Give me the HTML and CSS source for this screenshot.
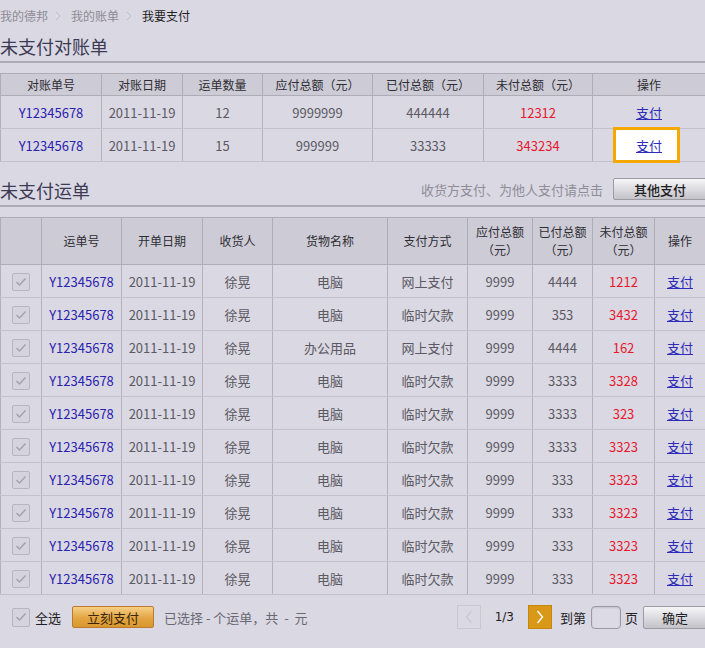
FILE: index.html
```html
<!DOCTYPE html>
<html lang="zh-CN">
<head>
<meta charset="utf-8">
<title>我要支付</title>
<link rel="stylesheet" href="styles.css">
</head>
<body>
<div class="page">
  <nav class="crumbs">
    <span class="crumb">我的德邦</span>
    <svg class="sep" width="6" height="10" viewBox="0 0 6 10"><path d="M1 1 L5 5 L1 9" fill="none" stroke="#bdbbc5" stroke-width="1"/></svg>
    <span class="crumb">我的账单</span>
    <svg class="sep" width="6" height="10" viewBox="0 0 6 10"><path d="M1 1 L5 5 L1 9" fill="none" stroke="#bdbbc5" stroke-width="1"/></svg>
    <span class="crumb current">我要支付</span>
  </nav>

  <div class="section-head first">
    <h2 class="section-title">未支付对账单</h2>
  </div>

  <table class="grid bills">
    <colgroup>
      <col style="width:101px"><col style="width:81px"><col style="width:80px"><col style="width:110px"><col style="width:111px"><col style="width:109px"><col style="width:113px">
    </colgroup>
    <thead>
      <tr><th>对账单号</th><th>对账日期</th><th>运单数量</th><th>应付总额（元）</th><th>已付总额（元）</th><th>未付总额（元）</th><th>操作</th></tr>
    </thead>
    <tbody>
      <tr><td class="no">Y12345678</td><td>2011-11-19</td><td>12</td><td>9999999</td><td>444444</td><td class="due">12312</td><td><a class="pay" href="#">支付</a></td></tr>
      <tr><td class="no">Y12345678</td><td>2011-11-19</td><td>15</td><td>999999</td><td>33333</td><td class="due">343234</td><td class="focus-cell"><span class="focus-box"></span><a class="pay" href="#">支付</a></td></tr>
    </tbody>
  </table>

  <div class="section-head second">
    <h2 class="section-title">未支付运单</h2>
    <div class="head-right">
      <span class="hint">收货方支付、为他人支付请点击</span>
      <button class="btn-grey other">其他支付</button>
    </div>
  </div>

  <table class="grid waybills">
    <colgroup>
      <col style="width:41px"><col style="width:80px"><col style="width:81px"><col style="width:70px"><col style="width:115px"><col style="width:80px"><col style="width:65px"><col style="width:60px"><col style="width:62px"><col style="width:51px">
    </colgroup>
    <thead>
      <tr><th></th><th>运单号</th><th>开单日期</th><th>收货人</th><th>货物名称</th><th>支付方式</th><th>应付总额<br>（元）</th><th>已付总额<br>（元）</th><th>未付总额<br>（元）</th><th>操作</th></tr>
    </thead>
    <tbody>
      <tr><td><span class="check"><svg width="16" height="16" viewBox="0 0 16 16"><path d="M3.5 8 L6.5 11 L12.5 4.5" fill="none" stroke="#a3a1ab" stroke-width="1.4"/></svg></span></td><td class="no">Y12345678</td><td>2011-11-19</td><td>徐晃</td><td>电脑</td><td>网上支付</td><td>9999</td><td>4444</td><td class="due">1212</td><td><a class="pay" href="#">支付</a></td></tr>
      <tr><td><span class="check"><svg width="16" height="16" viewBox="0 0 16 16"><path d="M3.5 8 L6.5 11 L12.5 4.5" fill="none" stroke="#a3a1ab" stroke-width="1.4"/></svg></span></td><td class="no">Y12345678</td><td>2011-11-19</td><td>徐晃</td><td>电脑</td><td>临时欠款</td><td>9999</td><td>353</td><td class="due">3432</td><td><a class="pay" href="#">支付</a></td></tr>
      <tr><td><span class="check"><svg width="16" height="16" viewBox="0 0 16 16"><path d="M3.5 8 L6.5 11 L12.5 4.5" fill="none" stroke="#a3a1ab" stroke-width="1.4"/></svg></span></td><td class="no">Y12345678</td><td>2011-11-19</td><td>徐晃</td><td>办公用品</td><td>网上支付</td><td>9999</td><td>4444</td><td class="due">162</td><td><a class="pay" href="#">支付</a></td></tr>
      <tr><td><span class="check"><svg width="16" height="16" viewBox="0 0 16 16"><path d="M3.5 8 L6.5 11 L12.5 4.5" fill="none" stroke="#a3a1ab" stroke-width="1.4"/></svg></span></td><td class="no">Y12345678</td><td>2011-11-19</td><td>徐晃</td><td>电脑</td><td>临时欠款</td><td>9999</td><td>3333</td><td class="due">3328</td><td><a class="pay" href="#">支付</a></td></tr>
      <tr><td><span class="check"><svg width="16" height="16" viewBox="0 0 16 16"><path d="M3.5 8 L6.5 11 L12.5 4.5" fill="none" stroke="#a3a1ab" stroke-width="1.4"/></svg></span></td><td class="no">Y12345678</td><td>2011-11-19</td><td>徐晃</td><td>电脑</td><td>临时欠款</td><td>9999</td><td>3333</td><td class="due">323</td><td><a class="pay" href="#">支付</a></td></tr>
      <tr><td><span class="check"><svg width="16" height="16" viewBox="0 0 16 16"><path d="M3.5 8 L6.5 11 L12.5 4.5" fill="none" stroke="#a3a1ab" stroke-width="1.4"/></svg></span></td><td class="no">Y12345678</td><td>2011-11-19</td><td>徐晃</td><td>电脑</td><td>临时欠款</td><td>9999</td><td>3333</td><td class="due">3323</td><td><a class="pay" href="#">支付</a></td></tr>
      <tr><td><span class="check"><svg width="16" height="16" viewBox="0 0 16 16"><path d="M3.5 8 L6.5 11 L12.5 4.5" fill="none" stroke="#a3a1ab" stroke-width="1.4"/></svg></span></td><td class="no">Y12345678</td><td>2011-11-19</td><td>徐晃</td><td>电脑</td><td>临时欠款</td><td>9999</td><td>333</td><td class="due">3323</td><td><a class="pay" href="#">支付</a></td></tr>
      <tr><td><span class="check"><svg width="16" height="16" viewBox="0 0 16 16"><path d="M3.5 8 L6.5 11 L12.5 4.5" fill="none" stroke="#a3a1ab" stroke-width="1.4"/></svg></span></td><td class="no">Y12345678</td><td>2011-11-19</td><td>徐晃</td><td>电脑</td><td>临时欠款</td><td>9999</td><td>333</td><td class="due">3323</td><td><a class="pay" href="#">支付</a></td></tr>
      <tr><td><span class="check"><svg width="16" height="16" viewBox="0 0 16 16"><path d="M3.5 8 L6.5 11 L12.5 4.5" fill="none" stroke="#a3a1ab" stroke-width="1.4"/></svg></span></td><td class="no">Y12345678</td><td>2011-11-19</td><td>徐晃</td><td>电脑</td><td>临时欠款</td><td>9999</td><td>333</td><td class="due">3323</td><td><a class="pay" href="#">支付</a></td></tr>
      <tr><td><span class="check"><svg width="16" height="16" viewBox="0 0 16 16"><path d="M3.5 8 L6.5 11 L12.5 4.5" fill="none" stroke="#a3a1ab" stroke-width="1.4"/></svg></span></td><td class="no">Y12345678</td><td>2011-11-19</td><td>徐晃</td><td>电脑</td><td>临时欠款</td><td>9999</td><td>333</td><td class="due">3323</td><td><a class="pay" href="#">支付</a></td></tr>
    </tbody>
  </table>

  <div class="footer-bar">
    <div class="footer-left">
      <span class="check big"><svg width="16" height="16" viewBox="0 0 16 16"><path d="M3.5 8 L6.5 11 L12.5 4.5" fill="none" stroke="#a3a1ab" stroke-width="1.4"/></svg></span>
      <span class="all">全选</span>
      <button class="btn-orange">立刻支付</button>
      <span class="summary">已选择 - 个运单，共&nbsp; - &nbsp;元</span>
    </div>
    <div class="pager">
      <span class="pg prev"><svg width="22" height="22" viewBox="0 0 22 22"><path d="M13.5 5 L8.5 11 L13.5 17" fill="none" stroke="#cbc9d1" stroke-width="1.3"/></svg></span>
      <span class="pg-num">1/3</span>
      <span class="pg next"><svg width="22" height="22" viewBox="0 0 22 22"><path d="M8.5 5 L13.5 11 L8.5 17" fill="none" stroke="#ffffff" stroke-width="1.4"/></svg></span>
      <span class="goto">到第</span>
      <input class="pg-input" type="text" value="">
      <span class="goto">页</span>
      <button class="btn-grey ok">确定</button>
    </div>
  </div>
</div>
</body>
</html>
```

FILE: styles.css
```css
* { box-sizing: border-box; }

html, body {
  margin: 0;
  padding: 0;
  background: #dad8e2;
}

body {
  font-family: "Noto Sans CJK SC", "Noto Sans", sans-serif;
  color: #5b5963;
  width: 705px;
  height: 648px;
  overflow: hidden;
}

.page {
  width: 705px;
}

/* breadcrumb */
.crumbs {
  height: 32px;
  display: flex;
  align-items: center;
  font-size: 12px;
  color: #8d8b96;
}
.crumb { line-height: 16px; }
.crumb.current { color: #222; }
.sep { margin: 0 10px 0 7px; }

/* section heads */
.section-head {
  display: flex;
  justify-content: space-between;
  align-items: flex-start;
  border-bottom: 2px solid #aeacb9;
}
.section-head.first { height: 31px; }
.section-head.second { height: 29px; margin-top: 16px; }

.section-title {
  margin: 0;
  font-size: 18px;
  font-weight: normal;
  color: #3c3a55;
  line-height: 29px;
}
.section-head.second .section-title { line-height: 24px; }

.head-right {
  display: flex;
  align-items: center;
  height: 22px;
}
.hint {
  font-size: 13px;
  color: #8f8d98;
  margin-right: 10px;
}

/* buttons */
.btn-grey {
  font-family: inherit;
  font-size: 13px;
  color: #1e1e22;
  background: linear-gradient(#f6f6f8, #d7d6dc 60%, #c4c3ca);
  border: 1px solid #9c9ba3;
  border-radius: 2px;
  padding: 0;
  height: 22px;
}
.btn-grey.other { width: 94px; margin-right: -2px; font-weight: 500; }
.btn-grey.ok { width: 64px; height: 23px; margin-right: -2px; }

.btn-orange {
  font-family: inherit;
  font-size: 13px;
  color: #3a2608;
  background: linear-gradient(#f5cf86, #e3a544 55%, #d9972e);
  border: 1px solid #bb7a30;
  border-radius: 2px;
  width: 82px;
  height: 22px;
  padding: 0;
}

/* tables */
.grid {
  width: 705px;
  table-layout: fixed;
  border-collapse: collapse;
  margin-top: 10px;
  border: 1px solid #a3a1ac;
}
.grid th {
  background: #cdcbd5;
  font-size: 12px;
  font-weight: normal;
  color: #2e2d33;
  border: 1px solid #aeacb6;
  padding: 0;
  text-align: center;
}
.grid td {
  font-size: 13px;
  color: #5b5963;
  text-align: center;
  padding: 0;
  border-left: 1px solid #b4b2bc;
  border-right: 1px solid #b4b2bc;
  border-bottom: 1px solid #c3c1cb;
}
.grid tbody tr { height: 33px; }
.bills thead tr { height: 22px; }
.waybills thead tr { height: 47px; }
.waybills th { line-height: 18px; }

.no { color: #2a22b0 !important; }
.due { color: #e8172c !important; }
.pay {
  color: #2d2bb8;
  text-decoration: underline;
}

.focus-cell { position: relative; }
.focus-box {
  position: absolute;
  left: 20px;
  top: -2px;
  width: 67px;
  height: 36px;
  border: 3px solid #f5a800;
  background: #ffffff;
}
.focus-cell .pay { position: relative; }

/* checkbox */
.check {
  display: inline-flex;
  align-items: center;
  justify-content: center;
  width: 18px;
  height: 18px;
  border: 1px solid #b7b5bf;
  border-radius: 2px;
  background: #d5d3dd;
  vertical-align: middle;
}
.check.big { width: 18px; height: 19px; }

/* footer */
.footer-bar {
  display: flex;
  justify-content: space-between;
  align-items: center;
  padding-top: 10px;
  height: 34px;
}
.footer-left {
  display: flex;
  align-items: center;
  padding-left: 12px;
}
.all {
  font-size: 13px;
  color: #1f1e24;
  margin-left: 5px;
  margin-right: 11px;
}
.summary {
  font-size: 13px;
  color: #6a6872;
  margin-left: 10px;
}

.pager {
  display: flex;
  align-items: center;
}
.pg {
  width: 24px;
  height: 24px;
  display: inline-flex;
  align-items: center;
  justify-content: center;
}
.pg.prev { border: 1px solid #c9c7d1; }
.pg.next { background: #d99818; border: 1px solid #c4860f; }
.pg-num {
  color: #222;
  margin: 0 14px;
  font-family: "DejaVu Sans", sans-serif;
  font-size: 12px;
}
.goto {
  font-size: 13px;
  color: #222;
}
.pg.next + .goto { margin-left: 8px; }
.pg-input {
  width: 30px;
  height: 23px;
  margin: 0 4px 0 5px;
  border: 1px solid #9a98a3;
  border-radius: 4px;
  background: #dcdae4;
  box-shadow: inset 0 1px 2px rgba(0,0,0,0.12);
  padding: 0;
}
.pg-input + .goto { margin-right: 5px; }
```
